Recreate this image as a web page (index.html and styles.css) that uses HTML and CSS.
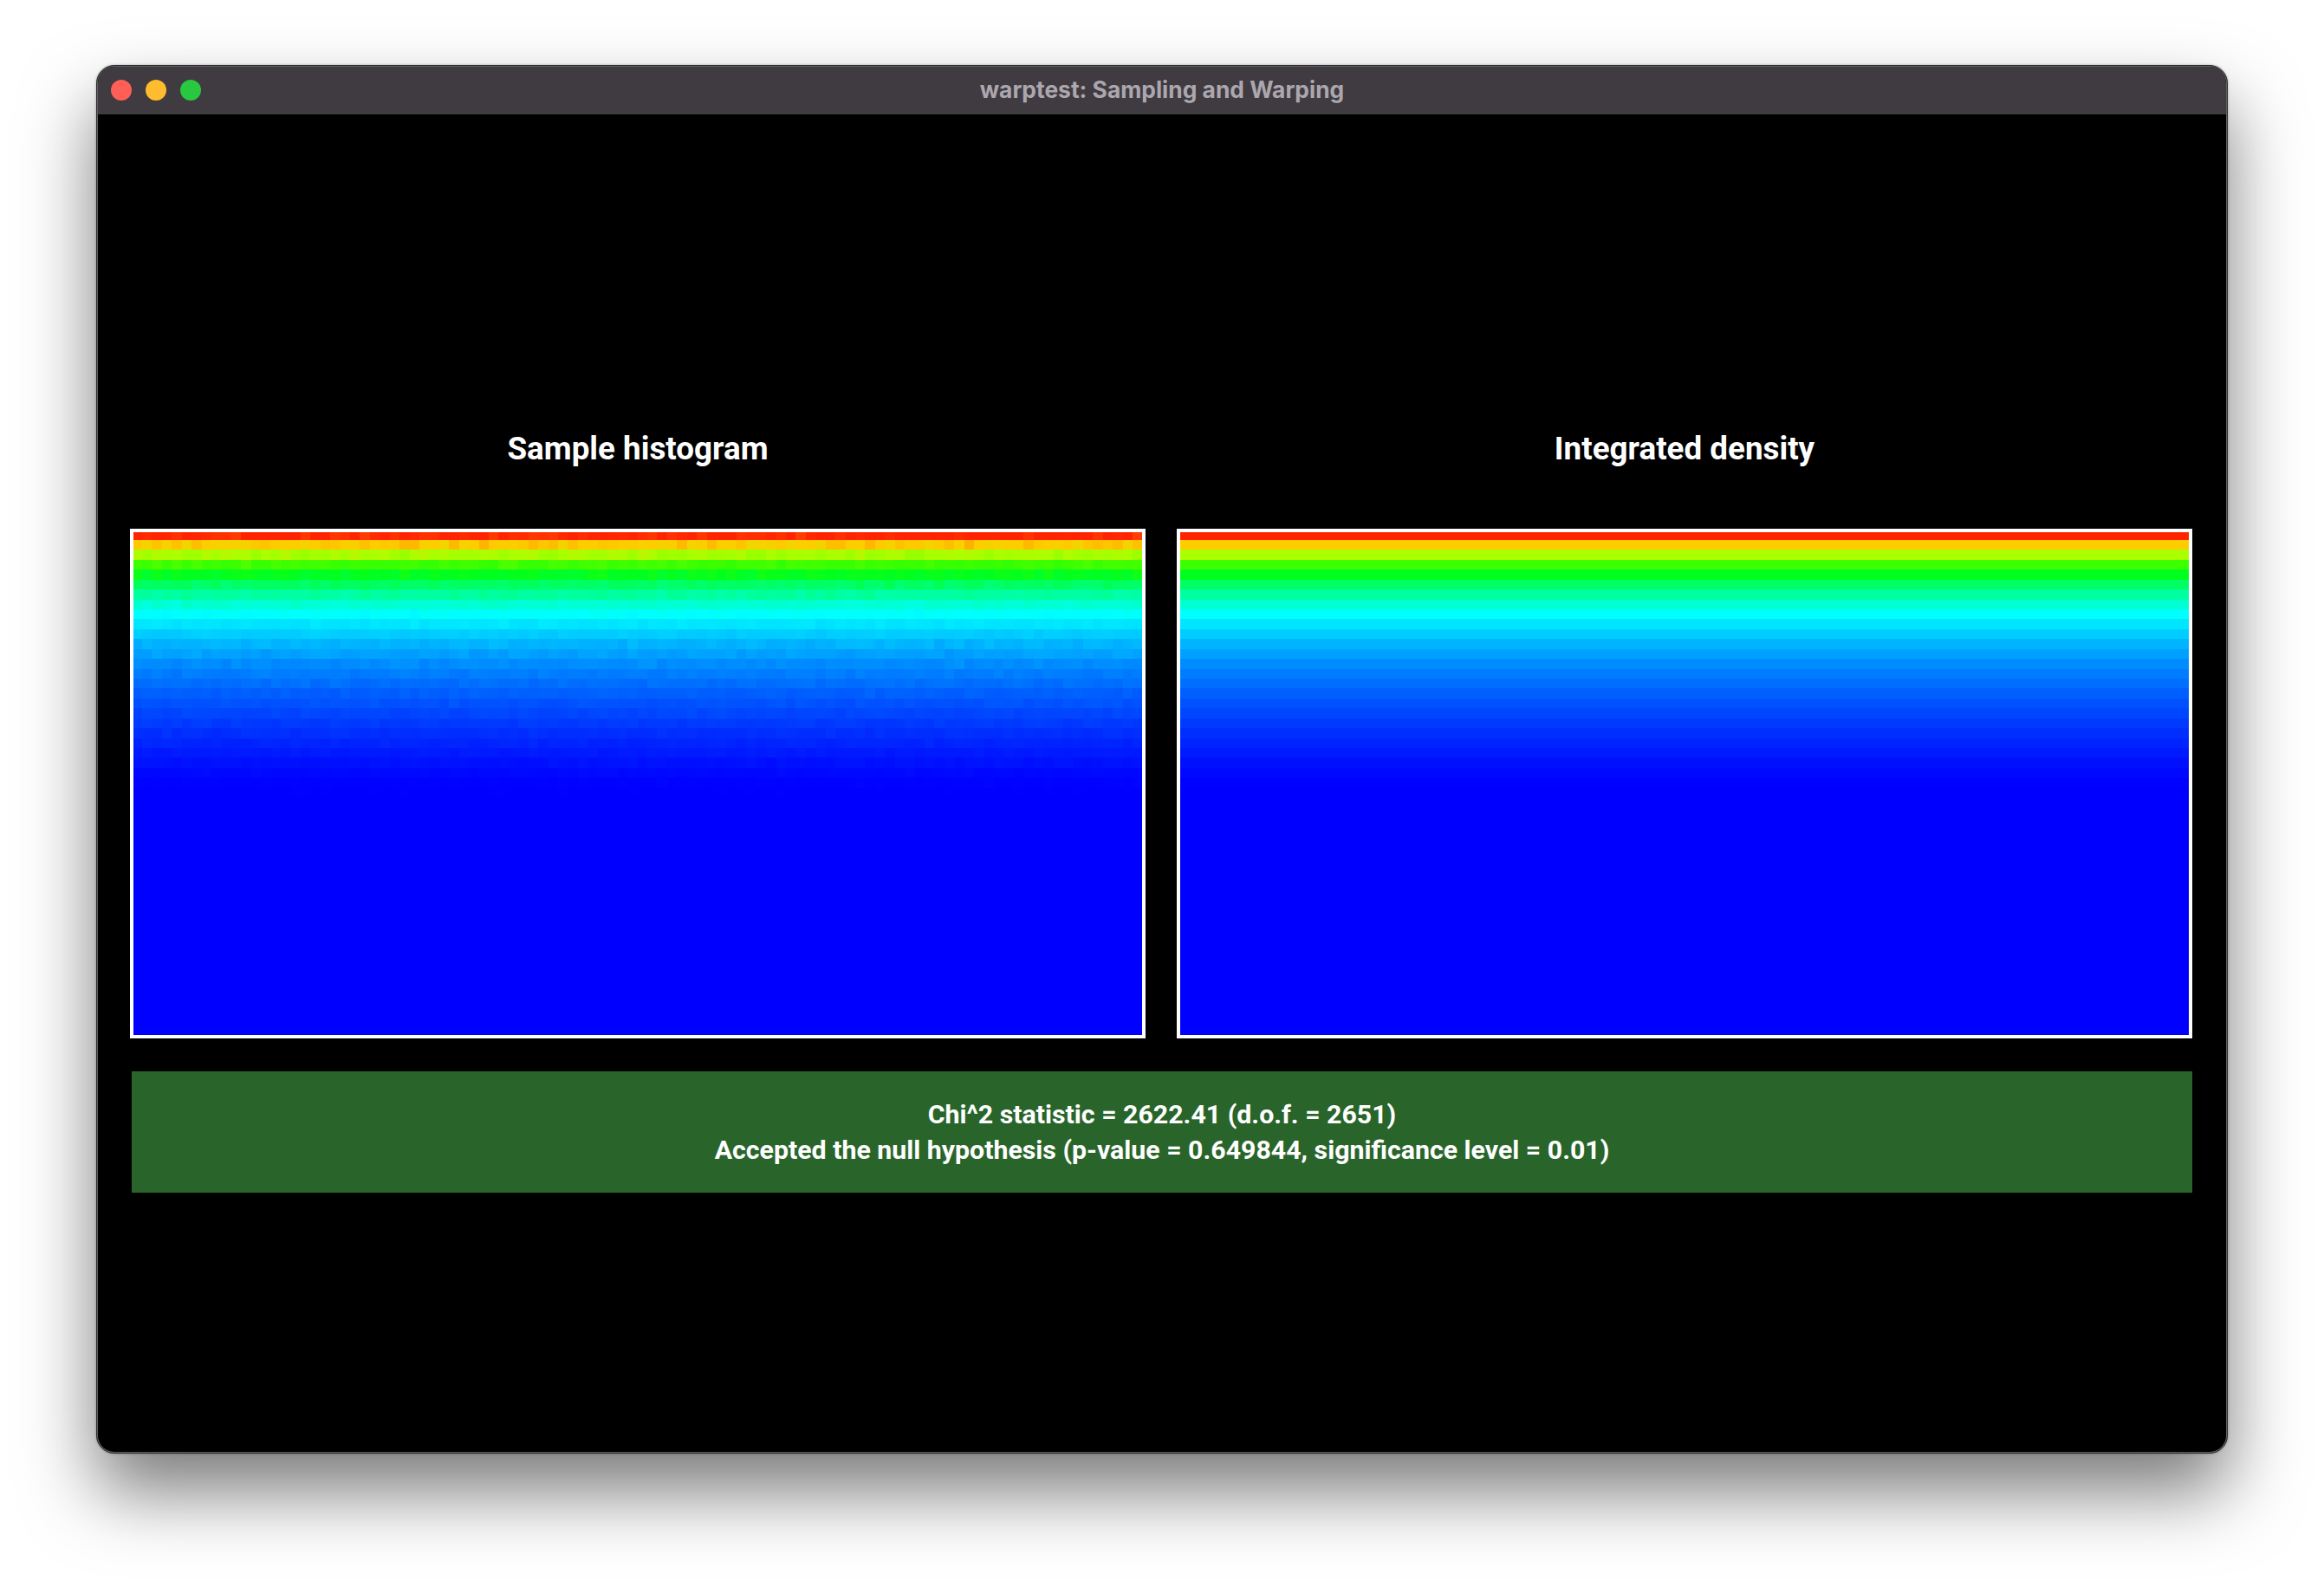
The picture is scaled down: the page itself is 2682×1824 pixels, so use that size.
FILE: index.html
```html
<!DOCTYPE html>
<html lang="en">
<head>
<meta charset="utf-8">
<title>warptest: Sampling and Warping</title>
<link rel="stylesheet" href="styles.css">
</head>
<body>
<div class="window">
  <div class="frame">
    <header class="titlebar">
      <div class="lights">
        <span class="light light-close"></span>
        <span class="light light-min"></span>
        <span class="light light-max"></span>
      </div>
      <div class="window-title">warptest: Sampling and Warping</div>
    </header>
    <main class="content">
      <div class="plots">
        <section class="plot">
          <h2 class="plot-title">Sample histogram</h2>
          <div class="plot-box"><canvas class="heatmap" width="1164" height="580" data-noise="1"></canvas></div>
        </section>
        <section class="plot">
          <h2 class="plot-title">Integrated density</h2>
          <div class="plot-box"><canvas class="heatmap" width="1164" height="580" data-noise="0"></canvas></div>
        </section>
      </div>
      <div class="result">
        <div>Chi^2 statistic = 2622.41 (d.o.f. = 2651)</div>
        <div>Accepted the null hypothesis (p-value = 0.649844, significance level = 0.01)</div>
      </div>
    </main>
  </div>
</div>
<script src="script.js"></script>
</body>
</html>
```
FILE: styles.css
```css
html, body {
  margin: 0;
  padding: 0;
  background: #fff;
}
body {
  width: 2682px;
  height: 1824px;
  padding: 75px 111px 0;
  box-sizing: border-box;
  overflow: hidden;
}
.window {
  width: 2460px;
  height: 1602px;
  box-sizing: border-box;
  border: 1px solid #2b2b2b;
  border-radius: 21px;
  padding: 1px;
  background: #5f5f5f;
  box-shadow: 0 44px 84px rgba(0, 0, 0, 0.52), 0 0 3px rgba(0, 0, 0, 0.3);
}
.frame {
  height: 100%;
  border-radius: 19px;
  overflow: hidden;
  display: flex;
  flex-direction: column;
  background: #000;
}
.titlebar {
  flex: 0 0 55px;
  padding-bottom: 3px;
  box-sizing: border-box;
  position: relative;
  display: flex;
  align-items: center;
  justify-content: center;
  background: #403a41;
}
.lights {
  position: absolute;
  left: 15px;
  top: 15px;
  display: flex;
  gap: 16px;
}
.light {
  width: 24px;
  height: 24px;
  border-radius: 50%;
}
.light-close { background: #ff5f57; }
.light-min { background: #febc2e; }
.light-max { background: #28c840; }
.window-title {
  font-family: Inter, "Liberation Sans", sans-serif;
  font-weight: 700;
  font-size: 26.4px;
  color: #aca7ae;
}
.content {
  flex: 1;
  display: flex;
  flex-direction: column;
  justify-content: center;
  gap: 38px;
  padding: 0 37px;
}
.plots {
  display: flex;
  gap: 36px;
}
.plot {
  flex: 0 0 1172px;
  display: flex;
  flex-direction: column;
}
.plot-title {
  margin: 0 0 7px;
  box-sizing: border-box;
  height: 172px;
  display: flex;
  align-items: center;
  justify-content: center;
  font-family: Roboto, "Liberation Sans", sans-serif;
  font-weight: 700;
  font-size: 36.8px;
  color: #fff;
}
.plot-box {
  box-sizing: border-box;
  width: 1172px;
  height: 588px;
  border: 4px solid #fff;
  background: #00f;
}
.heatmap {
  display: block;
  width: 1164px;
  height: 580px;
}
.result {
  margin: 0 2px;
  height: 140px;
  display: flex;
  flex-direction: column;
  justify-content: center;
  background: #29652a;
  color: #fff;
  text-align: center;
  font-family: Roboto, "Liberation Sans", sans-serif;
  font-weight: 700;
  font-size: 30.3px;
  line-height: 41px;
}
```
FILE: script.js
```js
// Colour of each histogram row of the density, top to bottom: [r, g, b]
var RAMP = [
  [255,36,0],[255,204,0],[170,255,0],[60,255,0],[0,255,30],[0,255,100],
  [0,255,160],[0,255,210],[0,255,255],[0,230,255],[0,205,255],[0,180,255],
  [0,160,255],[0,140,255],[0,125,255],[0,110,255],[0,95,255],[0,82,255],
  [0,70,255],[0,58,255],[0,46,255],[0,36,255],[0,26,255],[0,16,255],
  [0,8,255],[0,2,255],[0,0,255]
];
var CELL = 11.43, ORIGIN_X = 10 - CELL, ORIGIN_Y = 9 - CELL;
var seed = 12345;
function rnd() {
  seed = (seed * 1664525 + 1013904223) >>> 0;
  return seed / 4294967296;
}
function colorAt(t) {
  t = Math.max(0, Math.min(RAMP.length - 1, t));
  var i = Math.floor(t), f = t - i;
  var a = RAMP[i], b = RAMP[Math.min(i + 1, RAMP.length - 1)];
  return "rgb(" + [0, 1, 2].map(function (k) {
    return Math.round(a[k] + (b[k] - a[k]) * f);
  }).join(",") + ")";
}
document.querySelectorAll(".heatmap").forEach(function (canvas) {
  var ctx = canvas.getContext("2d");
  var noisy = canvas.dataset.noise === "1";
  for (var row = 0; row < 52; row++) {
    var y0 = Math.round(ORIGIN_Y + row * CELL), y1 = Math.round(ORIGIN_Y + (row + 1) * CELL);
    // Relative sampling noise shrinks where the density is high.
    var amount = row < 4 ? 0.2 : row < 11 ? 0.3 : 0.55;
    for (var col = 0; col < 104; col++) {
      var x0 = Math.round(ORIGIN_X + col * CELL), x1 = Math.round(ORIGIN_X + (col + 1) * CELL);
      var noise = noisy ? (rnd() + rnd() - 1) * amount : 0;
      ctx.fillStyle = colorAt(row + noise);
      ctx.fillRect(x0, y0, x1 - x0, y1 - y0);
    }
  }
});
```
